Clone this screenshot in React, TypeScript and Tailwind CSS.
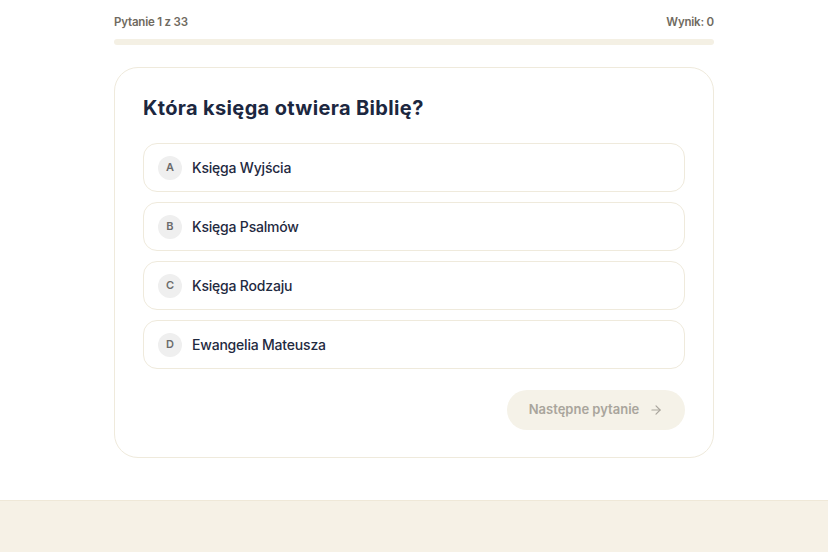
import { ArrowRight } from "lucide-react";

const options = [
  { key: "A", label: "Księga Wyjścia" },
  { key: "B", label: "Księga Psalmów" },
  { key: "C", label: "Księga Rodzaju" },
  { key: "D", label: "Ewangelia Mateusza" },
];

export default function App() {
  return (
    <div
      className="flex min-h-screen flex-col bg-white"
      style={{ fontFamily: "Inter, 'Noto Sans', sans-serif" }}
    >
      <main className="mx-auto w-[600px] pt-[14px]">
        <div className="flex items-center justify-between text-[11.5px] font-semibold leading-4 tracking-[-0.2px] text-[#6f6a60]">
          <span>Pytanie 1 z 33</span>
          <span>Wynik: 0</span>
        </div>
        <div className="mt-[9px] h-[6px] w-full rounded-full bg-[#f4f0e4]" />

        <section className="mt-[22px] rounded-[24px] border border-[#efeadc] bg-white px-[28px] pt-[26px] pb-[27px]">
          <h1 className="text-[20px] font-bold leading-7 tracking-[0.35px] text-[#1c2740]">
            Która księga otwiera Biblię?
          </h1>

          <div className="mt-[21px] flex flex-col gap-[10px]">
            {options.map((o) => (
              <button
                key={o.key}
                type="button"
                className="flex h-[49px] w-full items-center gap-[10px] rounded-[14px] border border-[#efeadc] bg-white pl-[14px] text-left"
              >
                <span className="flex h-[24px] w-[24px] items-center justify-center rounded-full bg-[#efefef] text-[11px] font-semibold text-[#6b6b6b]">
                  {o.key}
                </span>
                <span className="text-[14px] font-medium tracking-[-0.2px] text-[#1f2a3f]">
                  {o.label}
                </span>
              </button>
            ))}
          </div>

          <div className="mt-[21px] flex justify-end">
            <button
              type="button"
              disabled
              className="flex h-[40px] w-[178px] items-center justify-center gap-[10px] rounded-full bg-[#f5f2e8] text-[13px] font-semibold text-[#a9a59c]"
            >
              Następne pytanie
              <ArrowRight size={14} strokeWidth={2} />
            </button>
          </div>
        </section>
      </main>

      <footer className="mt-[42px] flex-1 border-t border-[#efe8d8] bg-[#f6f1e6]" />
    </div>
  );
}
